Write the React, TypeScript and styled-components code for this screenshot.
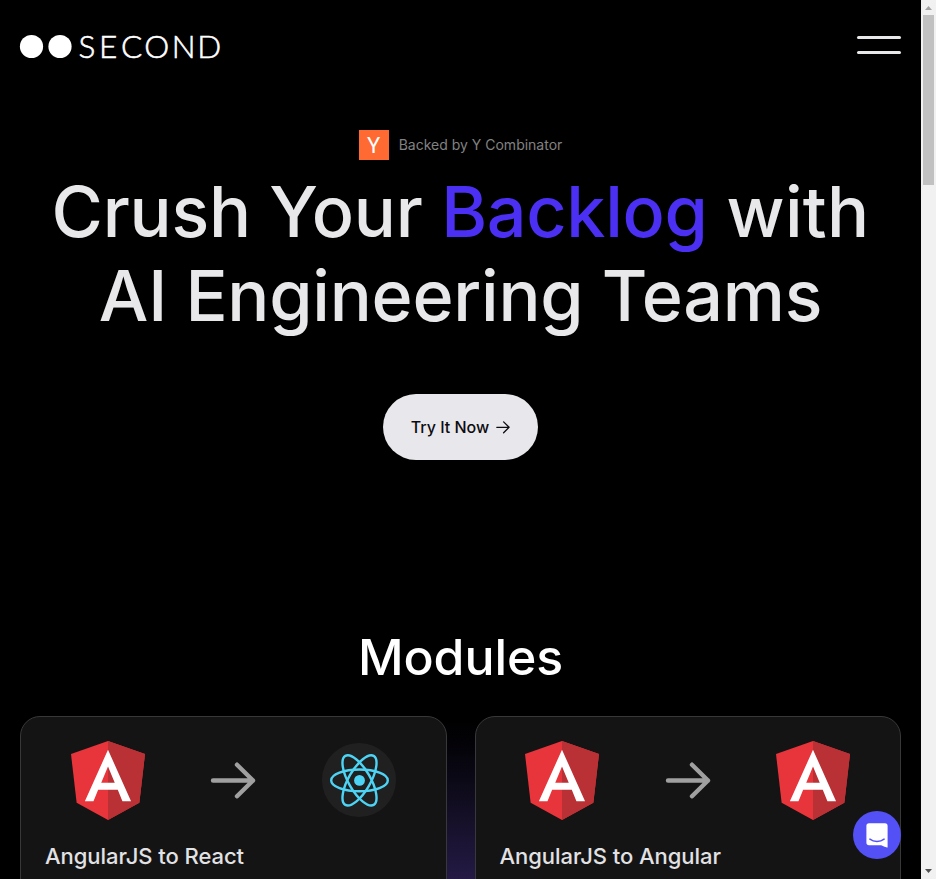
import React from "react";
import styled, { createGlobalStyle } from "styled-components";

const GlobalStyle = createGlobalStyle`
  *, *::before, *::after { box-sizing: border-box; }
  body {
    margin: 0;
    background: #000;
    font-family: Inter, "Liberation Sans", sans-serif;
    overflow: hidden;
  }
  svg { display: block; flex: none; overflow: visible; }
  h1, h2, h3, p { margin: 0; font-weight: 500; }
`;

const Window = styled.div`
  display: flex;
  width: 936px;
  height: 879px;
  background: #000;
  overflow: hidden;
`;

const Page = styled.div`
  width: 921px;
  padding: 0 20px;
  display: flex;
  flex-direction: column;
`;

const Header = styled.header`
  flex: none;
  height: 130px;
  padding-top: 34px;
  display: flex;
  align-items: flex-start;
  justify-content: space-between;
`;

const MenuButton = styled.button`
  display: flex;
  flex-direction: column;
  gap: 12px;
  width: 44px;
  margin-top: 2px;
  padding: 0;
  border: 0;
  background: none;
`;

const MenuLine = styled.span`
  height: 3px;
  border-radius: 1.5px;
  background: #e8e8eb;
`;

const Hero = styled.section`
  flex: none;
  display: flex;
  flex-direction: column;
  align-items: center;
`;

const Backer = styled.div`
  display: flex;
  align-items: center;
  gap: 10px;
  height: 30px;
  font-size: 14px;
  line-height: 28px;
  color: #828282;
`;

const BackerMark = styled.span`
  display: flex;
  align-items: center;
  justify-content: center;
  width: 30px;
  height: 30px;
  padding-top: 2px;
  background: #ff6a33;
  color: #fff;
  font-family: Roboto, sans-serif;
  font-size: 22px;
  line-height: 28px;
`;

const BackerText = styled.span`
  margin-top: -1px;
`;

const Headline = styled.h1`
  margin-top: 10px;
  font-size: 70px;
  line-height: 84px;
  text-align: center;
  white-space: nowrap;
  color: #e8e8ea;
`;

const Phrase = styled.span<{ $tracking: number }>`
  letter-spacing: ${(p) => p.$tracking}px;
`;

const Accent = styled(Phrase)`
  color: #4b2ff2;
`;

const CallToAction = styled.button`
  margin-top: 56px;
  display: flex;
  align-items: center;
  justify-content: center;
  gap: 7px;
  width: 155px;
  height: 66px;
  padding: 0;
  border: 0;
  border-radius: 33px;
  background: #e8e7eb;
  color: #0c0c10;
  font: 500 16px Inter, sans-serif;
`;

const ModulesTitle = styled.h2`
  flex: none;
  margin-top: 167px;
  height: 60px;
  font-size: 50px;
  line-height: 60px;
  letter-spacing: -0.1px;
  text-align: center;
  color: #fff;
`;

const ModuleGrid = styled.section`
  flex: none;
  margin-top: 29px;
  display: grid;
  grid-template-columns: 1fr 1fr;
  gap: 28px;
  height: 240px;
  background: linear-gradient(#000 0, #020104 20px, #0d0a19 70px, #17112b 110px, #241a45 163px, #302260 240px)
    center / 80px 100% no-repeat;
`;

const Card = styled.article`
  padding: 24px;
  border: 1px solid #38383a;
  border-radius: 20px;
  background: #141414;
`;

const Migration = styled.div`
  display: grid;
  grid-template-columns: repeat(3, 1fr);
  align-items: center;
  justify-items: center;
  height: 79px;
`;

const CardTitle = styled.h3`
  margin-top: 20px;
  font-size: 22px;
  line-height: 33px;
  letter-spacing: -0.05px;
  color: #e2e2e4;
`;

const Scrollbar = styled.div`
  width: 15px;
  height: 879px;
  display: flex;
  flex-direction: column;
  align-items: center;
  background: #f1f1f1;
`;

const ScrollThumb = styled.div`
  width: 11px;
  height: 170px;
  margin-bottom: auto;
  background: #c1c1c1;
`;

const ChatButton = styled.button`
  position: fixed;
  left: 853px;
  top: 811px;
  width: 48px;
  height: 48px;
  padding: 0;
  border: 0;
  border-radius: 50%;
  background: #5350f6;
  display: flex;
  align-items: center;
  justify-content: center;
`;

const LogoText = styled.text`
  font-family: Lato, sans-serif;
  font-weight: 300;
  font-size: 31.5px;
  fill: #fff;
  stroke: #fff;
  stroke-width: 0.6px;
`;

const Logo = () => (
  <svg width="202" height="34" viewBox="0 0 202 34" aria-label="Second">
    <circle cx="11.5" cy="12.5" r="11.6" fill="#fff" />
    <circle cx="40" cy="12.5" r="11.6" fill="#fff" />
    <LogoText x="58.4 79 101 124.2 151.8 177.2" y="23.6">SECOND</LogoText>
  </svg>
);

const AngularIcon = () => (
  <svg width="74" height="79" viewBox="31.9 30 186.2 200" preserveAspectRatio="none">
    <path fill="#e8343b" d="M125 30 31.9 63.2l14.2 123.1L125 230l78.9-43.7 14.2-123.1z" />
    <path fill="#b93035" d="M125 30v200l78.9-43.7 14.2-123.1z" />
    <path fill="#fff" d="M125 52.1 66.8 182.6h21.7l11.7-29.2h49.4l11.7 29.2H183L125 52.1zm17 83.3h-34l17-40.9z" />
  </svg>
);

const ReactIcon = () => (
  <svg width="74" height="75" viewBox="-37 -37 74 75">
    <circle r="37" fill="#202020" />
    <g transform="translate(.5 .4)" fill="none" stroke="#4dd4f5" strokeWidth="2.4">
      <ellipse rx="28.3" ry="10.9" />
      <ellipse rx="28.3" ry="10.9" transform="rotate(60)" />
      <ellipse rx="28.3" ry="10.9" transform="rotate(120)" />
      <circle r="5.4" fill="#4dd4f5" stroke="none" />
    </g>
  </svg>
);

const MigrationArrow = () => (
  <svg width="46" height="39" viewBox="0 0 46 39" fill="none" stroke="#a0a0a0" strokeWidth="4.4" strokeLinecap="round" strokeLinejoin="round">
    <path d="M3 19.5h40M27 3.7 43 19.5 27 35.3" />
  </svg>
);

const ButtonArrow = () => (
  <svg width="14" height="14" viewBox="0 0 14 14" fill="none" stroke="#0c0c10" strokeWidth="1.3" strokeLinecap="round" strokeLinejoin="round">
    <path d="M.8 7.3h12.3M7.6 1.9 13.1 7.3l-5.5 5.4" />
  </svg>
);

const ChatIcon = () => (
  <svg width="22" height="25" viewBox="0 0 22 25">
    <path fill="#fff" d="M3 .3h16a2.6 2.6 0 0 1 2.6 2.6v21.6s-3.4-.6-6.4-2.3H3A2.6 2.6 0 0 1 .4 19.6V2.9A2.6 2.6 0 0 1 3 .3z" />
    <path d="M3.9 16.1c4 3.1 10.2 3.1 14.2 0" fill="none" stroke="#5350f6" strokeWidth="1.5" strokeLinecap="round" />
  </svg>
);

interface Module {
  title: string;
  target: React.ReactNode;
}

const modules: Module[] = [
  { title: "AngularJS to React", target: <ReactIcon /> },
  { title: "AngularJS to Angular", target: <AngularIcon /> },
];

export default function App() {
  return (
    <Window>
      <GlobalStyle />
      <Page>
        <Header>
          <Logo />
          <MenuButton aria-label="Menu">
            <MenuLine />
            <MenuLine />
          </MenuButton>
        </Header>
        <Hero>
          <Backer>
            <BackerMark>Y</BackerMark>
            <BackerText>Backed by Y Combinator</BackerText>
          </Backer>
          <Headline>
            <Phrase $tracking={-0.2}>Crush Your </Phrase>
            <Accent $tracking={-0.3}>Backlog</Accent>
            <Phrase $tracking={0.3}> with</Phrase>
            <br />
            <Phrase $tracking={-0.25}>AI Engineering Teams</Phrase>
          </Headline>
          <CallToAction>
            Try It Now
            <ButtonArrow />
          </CallToAction>
        </Hero>
        <ModulesTitle>Modules</ModulesTitle>
        <ModuleGrid>
          {modules.map((module) => (
            <Card key={module.title}>
              <Migration>
                <AngularIcon />
                <MigrationArrow />
                {module.target}
              </Migration>
              <CardTitle>{module.title}</CardTitle>
            </Card>
          ))}
        </ModuleGrid>
      </Page>
      <Scrollbar>
        <svg width="15" height="15" viewBox="0 0 15 15">
          <path d="M4 10l3.5-4L11 10z" fill="#a3a3a3" />
        </svg>
        <ScrollThumb />
        <svg width="15" height="15" viewBox="0 0 15 15">
          <path d="M4 5l3.5 4L11 5z" fill="#505050" />
        </svg>
      </Scrollbar>
      <ChatButton aria-label="Chat">
        <ChatIcon />
      </ChatButton>
    </Window>
  );
}
